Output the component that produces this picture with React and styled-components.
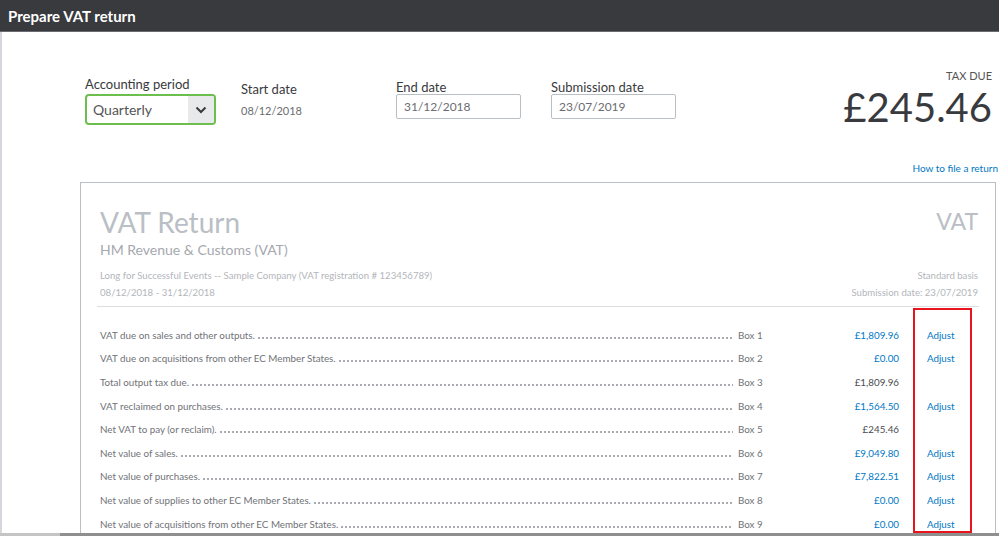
import React from 'react';
import styled, { createGlobalStyle } from 'styled-components';

const GlobalStyle = createGlobalStyle`
  body {
    margin: 0;
    background: #fff;
    font-family: Lato, "Open Sans", "Liberation Sans", sans-serif;
  }
`;

const Page = styled.div`
  width: 999px;
  height: 536px;
  display: flex;
  flex-direction: column;
  overflow: hidden;
`;

const Header = styled.div`
  flex-shrink: 0;
  height: 32px;
  display: flex;
  align-items: center;
  padding-left: 8px;
  background: #393a3d;
  border-bottom: 1px solid #6b6c72;
  box-sizing: border-box;
  color: #fff;
  font-size: 15px;
  font-weight: 700;
`;

const Main = styled.div`
  flex: 1;
  border-left: 2px solid #d4d7dc;
  overflow: hidden;
`;

const ScrollBar = styled.div`
  flex-shrink: 0;
  height: 3px;
  background: linear-gradient(to right, #c4c4c4 0 60px, #8f8f8f 60px 100%);
`;

const FormRow = styled.div`
  height: 129px;
  box-sizing: border-box;
  padding: 36px 7px 0 83px;
  display: flex;
  align-items: flex-start;
`;

const Field = styled.div`
  width: ${(p) => p.$width}px;
  flex-shrink: 0;
`;

const FieldLabel = styled.div`
  margin-top: ${(p) => p.$top}px;
  font-size: 13px;
  line-height: 16px;
  color: #393a3d;
`;

const StaticValue = styled.div`
  margin-top: 7px;
  font-size: 11px;
  line-height: 14px;
  color: #6b6c72;
`;

const Select = styled.div`
  margin-top: 2px;
  width: 131px;
  height: 31px;
  box-sizing: border-box;
  border: 2px solid #6cbf4f;
  border-radius: 4px;
  display: flex;
  overflow: hidden;
`;

const SelectText = styled.div`
  flex: 1;
  padding-left: 6px;
  font-size: 14px;
  line-height: 27px;
  color: #555;
`;

const Chevron = styled.div`
  width: 26px;
  display: flex;
  align-items: center;
  justify-content: center;
  background: #e8e9eb;
`;

const DateInput = styled.div`
  margin-top: -1px;
  width: 125px;
  height: 25px;
  box-sizing: border-box;
  border: 1px solid #babec5;
  border-radius: 2px;
  padding-left: 7px;
  font-size: 12px;
  line-height: 23px;
  color: #6b6c72;
`;

const TaxDue = styled.div`
  margin-left: auto;
  text-align: right;
  color: #393a3d;
`;

const TaxLabel = styled.div`
  margin-top: 1px;
  font-size: 11px;
  line-height: 14px;
  color: #555;
`;

const TaxAmount = styled.div`
  margin-top: 2px;
  font-size: 40px;
  line-height: 44px;
`;

const LinkRow = styled.div`
  padding-right: 1px;
  text-align: right;
  font-size: 10px;
  line-height: 14px;
  color: #0077c5;
`;

const Card = styled.div`
  position: relative;
  margin: 7px 3px 0 78px;
  border: 1px solid #babec5;
  padding-top: 23px;
  height: 500px;
`;

const CardHead = styled.div`
  padding: 0 17px 0 19px;
`;

const TitleRow = styled.div`
  display: flex;
  justify-content: space-between;
  align-items: flex-start;
`;

const Title = styled.div`
  font-size: 28px;
  line-height: 32px;
  color: #babec5;
`;

const TitleTag = styled.div`
  margin-top: 1px;
  font-size: 23px;
  line-height: 28px;
  color: #babec5;
`;

const Agency = styled.div`
  margin-top: 3px;
  font-size: 14px;
  line-height: 18px;
  color: #a5a8ae;
`;

const MetaRow = styled.div`
  display: flex;
  justify-content: space-between;
  font-size: 9.6px;
  line-height: 17px;
  color: #b3b6bb;
  margin-top: ${(p) => p.$top || 0}px;
`;

const Divider = styled.div`
  margin: 5px 16px 0 16px;
  height: 1px;
  background: #dcdee1;
`;

const Rows = styled.div`
  padding: 16px 23px 0 19px;
`;

const Row = styled.div`
  display: grid;
  grid-template-columns: 638px 60px 101px 73px;
  height: 23.6px;
  align-items: center;
  font-size: 9.8px;
  color: #707277;
`;

const LabelCell = styled.div`
  display: flex;
  align-items: baseline;
  white-space: nowrap;
  padding-right: 5px;
`;

const Leader = styled.span`
  flex: 1;
  height: 2px;
  margin-left: 3px;
  background-image: radial-gradient(circle at 1px 1px, #a9abb0 0.75px, transparent 1px);
  background-size: 4px 2px;
  background-repeat: repeat-x;
`;

const Amount = styled.div`
  text-align: right;
  color: ${(p) => (p.$link ? '#0077c5' : '#4a4b4f')};
`;

const AdjustCell = styled.div`
  padding-left: 28px;
  color: #0077c5;
`;

const Highlight = styled.div`
  position: absolute;
  left: 832px;
  top: 125px;
  width: 59px;
  height: 225px;
  box-sizing: border-box;
  border: 2px solid #e8141b;
  pointer-events: none;
`;

const rows = [
  { label: 'VAT due on sales and other outputs.', box: 'Box 1', amount: '£1,809.96', adjust: true },
  { label: 'VAT due on acquisitions from other EC Member States.', box: 'Box 2', amount: '£0.00', adjust: true },
  { label: 'Total output tax due.', box: 'Box 3', amount: '£1,809.96', adjust: false },
  { label: 'VAT reclaimed on purchases.', box: 'Box 4', amount: '£1,564.50', adjust: true },
  { label: 'Net VAT to pay (or reclaim).', box: 'Box 5', amount: '£245.46', adjust: false },
  { label: 'Net value of sales.', box: 'Box 6', amount: '£9,049.80', adjust: true },
  { label: 'Net value of purchases.', box: 'Box 7', amount: '£7,822.51', adjust: true },
  { label: 'Net value of supplies to other EC Member States.', box: 'Box 8', amount: '£0.00', adjust: true },
  { label: 'Net value of acquisitions from other EC Member States.', box: 'Box 9', amount: '£0.00', adjust: true },
];

function ChevronDown() {
  return (
    <svg width="14" height="14" viewBox="0 0 14 14">
      <polyline points="2.5,4.5 7,9 11.5,4.5" fill="none" stroke="#393a3d" strokeWidth="2" />
    </svg>
  );
}

export default function App() {
  return (
    <Page>
      <GlobalStyle />
      <Header>Prepare VAT return</Header>
      <Main>
        <FormRow>
          <Field $width={156}>
            <FieldLabel $top={8}>Accounting period</FieldLabel>
            <Select>
              <SelectText>Quarterly</SelectText>
              <Chevron><ChevronDown /></Chevron>
            </Select>
          </Field>
          <Field $width={155}>
            <FieldLabel $top={13}>Start date</FieldLabel>
            <StaticValue>08/12/2018</StaticValue>
          </Field>
          <Field $width={155}>
            <FieldLabel $top={11}>End date</FieldLabel>
            <DateInput>31/12/2018</DateInput>
          </Field>
          <Field $width={155}>
            <FieldLabel $top={11}>Submission date</FieldLabel>
            <DateInput>23/07/2019</DateInput>
          </Field>
          <TaxDue>
            <TaxLabel>TAX DUE</TaxLabel>
            <TaxAmount>£245.46</TaxAmount>
          </TaxDue>
        </FormRow>
        <LinkRow>How to file a return</LinkRow>
        <Card>
          <CardHead>
            <TitleRow>
              <Title>VAT Return</Title>
              <TitleTag>VAT</TitleTag>
            </TitleRow>
            <Agency>HM Revenue &amp; Customs (VAT)</Agency>
            <MetaRow $top={8}>
              <span>Long for Successful Events -- Sample Company (VAT registration # 123456789)</span>
              <span>Standard basis</span>
            </MetaRow>
            <MetaRow>
              <span>08/12/2018 - 31/12/2018</span>
              <span>Submission date: 23/07/2019</span>
            </MetaRow>
          </CardHead>
          <Divider />
          <Rows>
            {rows.map((r) => (
              <Row key={r.box}>
                <LabelCell>
                  <span>{r.label}</span>
                  <Leader />
                </LabelCell>
                <span>{r.box}</span>
                <Amount $link={r.adjust}>{r.amount}</Amount>
                <AdjustCell>{r.adjust ? 'Adjust' : ''}</AdjustCell>
              </Row>
            ))}
          </Rows>
          <Highlight />
        </Card>
      </Main>
      <ScrollBar />
    </Page>
  );
}
